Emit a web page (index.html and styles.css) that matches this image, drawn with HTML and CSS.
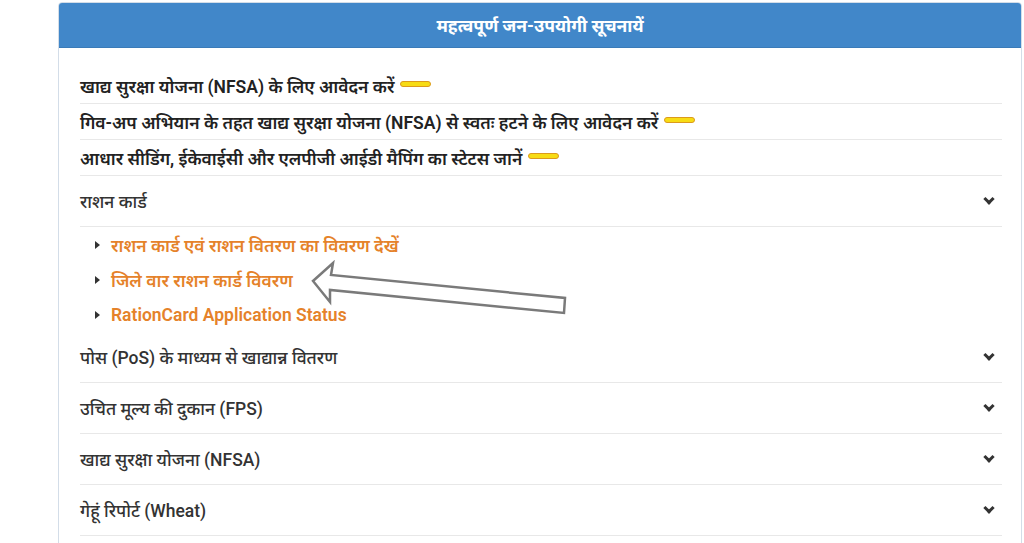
FILE: index.html
```html
<!DOCTYPE html>
<html lang="hi">
<head>
<meta charset="utf-8">
<title>महत्वपूर्ण जन-उपयोगी सूचनायें</title>
<link rel="stylesheet" href="styles.css">
</head>
<body>
<div class="card">
  <div class="card-head">महत्वपूर्ण जन-उपयोगी सूचनायें</div>
  <div class="card-body">
    <div class="link-row">खाद्य सुरक्षा योजना (NFSA) के लिए आवेदन करें <span class="badge"></span></div>
    <div class="link-row">गिव-अप अभियान के तहत खाद्य सुरक्षा योजना (NFSA) से स्वतः हटने के लिए आवेदन करें <span class="badge"></span></div>
    <div class="link-row">आधार सीडिंग, ईकेवाईसी और एलपीजी आईडी मैपिंग का स्टेटस जानें <span class="badge"></span></div>

    <div class="acc-row"><span>राशन कार्ड</span><span class="chev"></span></div>
    <ul class="sub">
      <li><span class="tri"></span>राशन कार्ड एवं राशन वितरण का विवरण देखें</li>
      <li><span class="tri"></span>जिले वार राशन कार्ड विवरण</li>
      <li><span class="tri"></span>RationCard Application Status</li>
    </ul>
    <div class="acc-row"><span>पोस (PoS) के माध्यम से खाद्यान्न वितरण</span><span class="chev"></span></div>
    <div class="acc-row"><span>उचित मूल्य की दुकान (FPS)</span><span class="chev"></span></div>
    <div class="acc-row"><span>खाद्य सुरक्षा योजना (NFSA)</span><span class="chev"></span></div>
    <div class="acc-row"><span>गेहूं रिपोर्ट (Wheat)</span><span class="chev"></span></div>
  </div>
</div>
<svg class="arrow" width="270" height="60" viewBox="0 0 270 60">
  <polygon points="3,21 23,3 21,15 255,38 254,53 20,30 20,42" fill="#fff" stroke="#7a7a7a" stroke-width="2.5" stroke-linejoin="miter"/>
</svg>
</body>
</html>
```
FILE: styles.css
```css
html, body {
  margin: 0;
  padding: 0;
  background: #fff;
  font-family: Roboto, "Noto Sans", "Noto Sans Devanagari", "Lohit Devanagari", sans-serif;
  color: #333;
}
.card {
  margin: 2px 2px 0 58px;
  border: 1px solid #d3dde8;
  border-radius: 4px 4px 0 0;
  height: 560px;
}
.card-head {
  height: 44px;
  background: #4187c9;
  color: #fff;
  font-weight: 700;
  font-size: 17.5px;
  display: flex;
  align-items: center;
  justify-content: center;
  border-radius: 3px 3px 0 0;
  border-bottom: 1px solid #3a7bb8;
}
.card-body {
  padding: 20px 19px 0 21px;
}
.link-row {
  height: 35px;
  display: flex;
  align-items: center;
  font-size: 17.5px;
  font-weight: 600;
  color: #222;
  border-bottom: 1px solid #e8e8e8;
}
.link-row:last-of-type {
  height: 36px;
}
.badge {
  display: inline-block;
  width: 29px;
  height: 4px;
  margin-left: 6px;
  margin-top: -4px;
  background: #f7dc14;
  border: 1.5px solid #dc9a1c;
  border-radius: 4px;
}
.acc-row {
  height: 50px;
  display: flex;
  align-items: center;
  justify-content: space-between;
  font-size: 17.5px;
  font-weight: 500;
  color: #333;
  border-bottom: 1px solid #e8e8e8;
}
.chev {
  width: 5px;
  height: 5px;
  border-right: 3px solid #333;
  border-bottom: 3px solid #333;
  transform: rotate(45deg);
  margin: -4px 9px 0 0;
}
.sub {
  list-style: none;
  margin: 0;
  padding: 0 0 0 15px;
}
.sub li {
  height: 35px;
  display: flex;
  align-items: center;
  font-size: 17.5px;
  font-weight: 600;
  color: #e5822a;
}
.tri {
  width: 0;
  height: 0;
  border-left: 5px solid #333;
  border-top: 4px solid transparent;
  border-bottom: 4px solid transparent;
  margin-right: 11px;
}
.arrow {
  position: absolute;
  left: 310px;
  top: 260px;
}
```
